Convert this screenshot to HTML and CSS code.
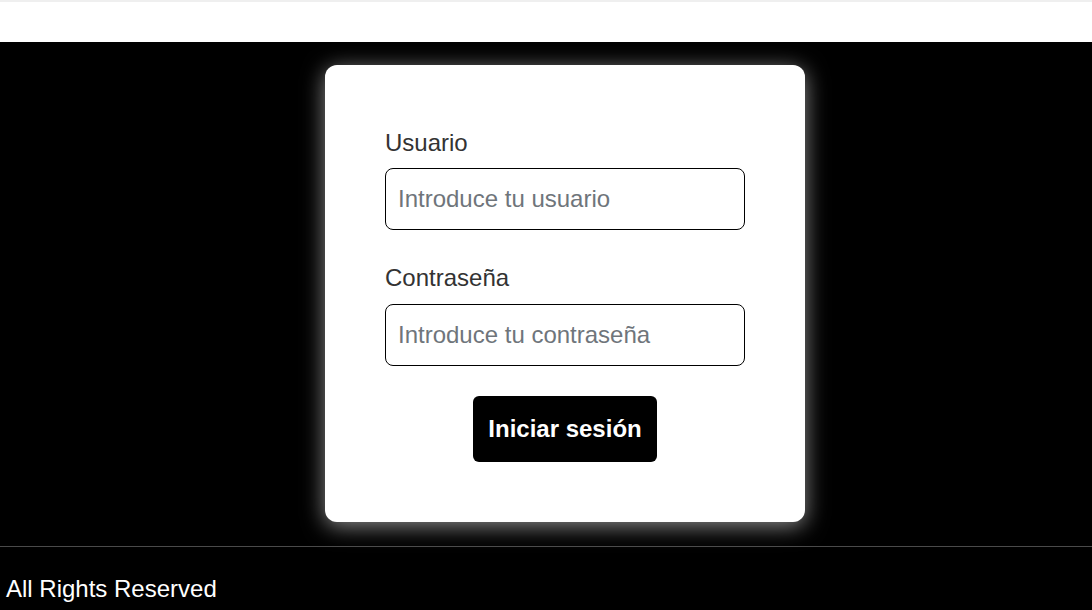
FILE: index.html
```html
<!DOCTYPE html>
<html lang="es">
<head>
<meta charset="utf-8">
<title>Login</title>
<link rel="stylesheet" href="styles.css">
</head>
<body>
<header class="topbar"></header>
<main class="main">
  <form class="card">
    <div class="group">
      <label class="label" for="user">Usuario</label>
      <input class="input" id="user" type="text" placeholder="Introduce tu usuario">
    </div>
    <div class="group">
      <label class="label" for="pass">Contraseña</label>
      <input class="input" id="pass" type="password" placeholder="Introduce tu contraseña">
    </div>
    <div class="actions">
      <button class="btn" type="button">Iniciar sesión</button>
    </div>
  </form>
</main>
<footer class="footer">All Rights Reserved</footer>
</body>
</html>
```

FILE: styles.css
```css
html, body {
  margin: 0;
  padding: 0;
  height: 100%;
  overflow: hidden;
}
body {
  background: #000;
  font-family: "Liberation Sans", Arial, sans-serif;
}
.topbar {
  height: 40px;
  background: #fff;
  border-top: 2px solid #efefef;
}
.main {
  display: flex;
  justify-content: center;
  padding: 23px 0 24px 38px;
  background: #000;
}
.card {
  box-sizing: border-box;
  width: 480px;
  background: #fff;
  border-radius: 12px;
  padding: 64px 60px 60px;
  box-shadow: 0 4px 22px rgba(255, 255, 255, 0.55);
  display: flex;
  flex-direction: column;
}
.group {
  display: flex;
  flex-direction: column;
  margin-bottom: 34px;
}
.group + .group {
  margin-bottom: 30px;
}
.group + .group .label {
  margin-bottom: 12px;
}
.label {
  font-size: 24px;
  line-height: 28px;
  color: #333;
  margin-bottom: 11px;
}
.input {
  box-sizing: border-box;
  width: 360px;
  height: 62px;
  border: 1px solid #000;
  border-radius: 8px;
  padding: 0 12px;
  font-family: "Liberation Sans", Arial, sans-serif;
  font-size: 24px;
  color: #222;
  background: #fff;
  outline: none;
}
.input::placeholder {
  color: #6f757b;
}
.actions {
  display: flex;
  justify-content: center;
}
.btn {
  height: 66px;
  padding: 0 15px;
  background: #000;
  color: #fff;
  border: none;
  border-radius: 6px;
  font-family: "Liberation Sans", Arial, sans-serif;
  font-size: 24px;
  font-weight: bold;
  cursor: pointer;
}
.footer {
  border-top: 1px solid #4a4a4a;
  height: 63px;
  box-sizing: border-box;
  padding: 28px 6px 7px;
  color: #fff;
  font-size: 24px;
  line-height: 28px;
}
```
